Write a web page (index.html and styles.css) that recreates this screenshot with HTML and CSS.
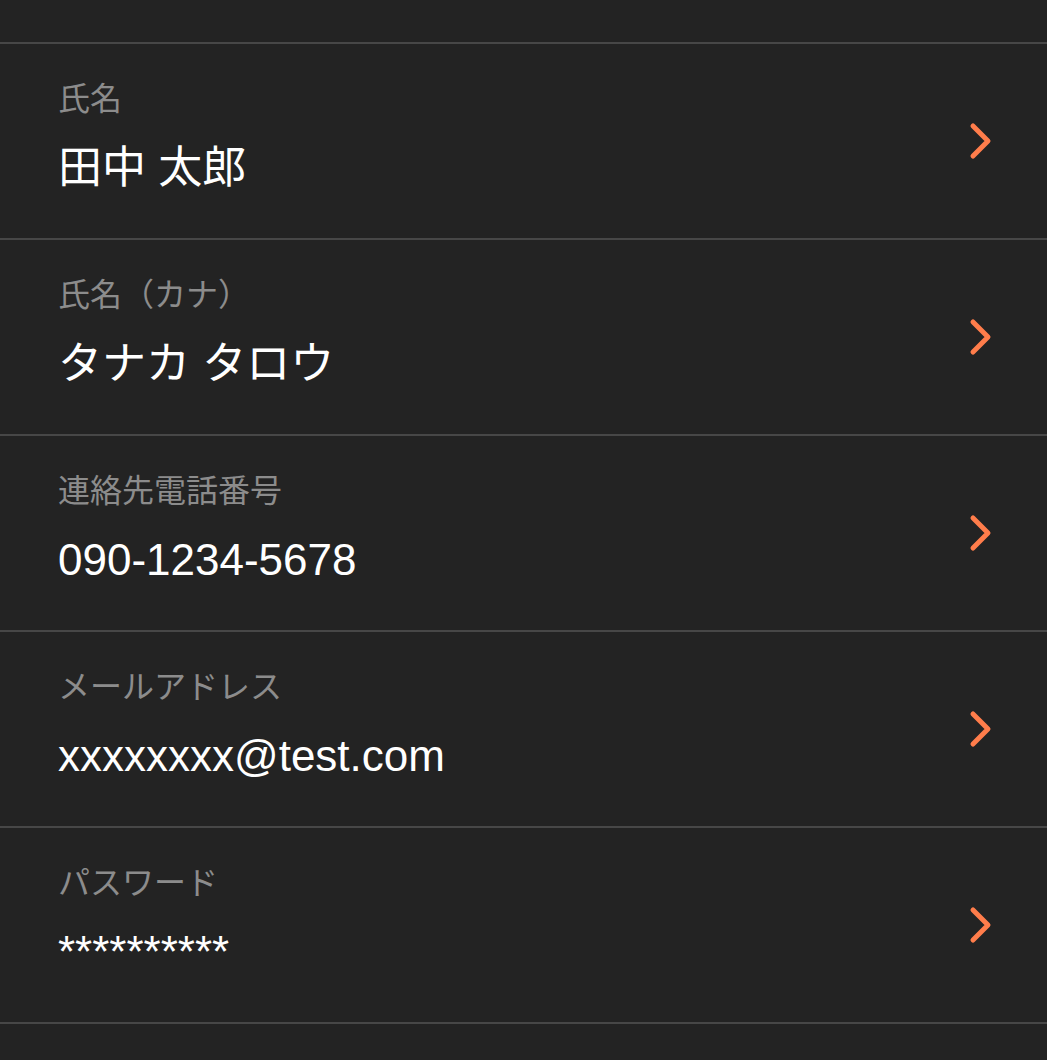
FILE: index.html
```html
<!DOCTYPE html>
<html lang="ja">
<head>
    <meta charset="UTF-8">
    <meta name="viewport" content="width=device-width, initial-scale=1.0">
    <title>アカウント情報</title>
    <link rel="stylesheet" href="styles.css">
</head>
<body>

    <!-- アカウント情報リスト -->
    <ul class="info-list">
        <li class="info-row">
            <div class="info-text">
                <span class="info-label">氏名</span>
                <span class="info-value">田中 太郎</span>
            </div>
            <svg class="chevron" viewBox="0 0 24 38" aria-hidden="true"><path d="M4 4 L19 19 L4 34"/></svg>
        </li>
        <li class="info-row">
            <div class="info-text">
                <span class="info-label">氏名（カナ）</span>
                <span class="info-value">タナカ タロウ</span>
            </div>
            <svg class="chevron" viewBox="0 0 24 38" aria-hidden="true"><path d="M4 4 L19 19 L4 34"/></svg>
        </li>
        <li class="info-row">
            <div class="info-text">
                <span class="info-label">連絡先電話番号</span>
                <span class="info-value">090-1234-5678</span>
            </div>
            <svg class="chevron" viewBox="0 0 24 38" aria-hidden="true"><path d="M4 4 L19 19 L4 34"/></svg>
        </li>
        <li class="info-row">
            <div class="info-text">
                <span class="info-label">メールアドレス</span>
                <span class="info-value">xxxxxxxx@test.com</span>
            </div>
            <svg class="chevron" viewBox="0 0 24 38" aria-hidden="true"><path d="M4 4 L19 19 L4 34"/></svg>
        </li>
        <li class="info-row">
            <div class="info-text">
                <span class="info-label">パスワード</span>
                <span class="info-value">**********</span>
            </div>
            <svg class="chevron" viewBox="0 0 24 38" aria-hidden="true"><path d="M4 4 L19 19 L4 34"/></svg>
        </li>
    </ul>

</body>
</html>
```

FILE: styles.css
```css
/* ベース */
body {
    margin: 0;
    padding: 0;
    background-color: #232323;
    color: #fff;
    font-family: "Liberation Sans", "Noto Sans CJK JP", sans-serif;
}

/* リスト */
.info-list {
    list-style: none;
    margin: 0;
    padding: 42px 0 0;
    border-bottom: 2px solid #474747;
}

/* 各行 */
.info-row {
    display: flex;
    align-items: center;
    justify-content: space-between;
    height: 194px;
    padding: 0 54px 0 58px;
    border-top: 2px solid #474747;
}

.info-text {
    display: flex;
    flex-direction: column;
    gap: 23px;
    margin-top: -9px;
}

.info-label {
    font-size: 32px;
    line-height: 40px;
    color: #8c8c8c;
}

.info-value {
    font-size: 44px;
    line-height: 52px;
    color: #fff;
}

/* 矢印 */
.chevron {
    width: 24px;
    height: 38px;
    fill: none;
    stroke: #ff7d4b;
    stroke-width: 5;
    stroke-linecap: round;
    stroke-linejoin: round;
}
```
